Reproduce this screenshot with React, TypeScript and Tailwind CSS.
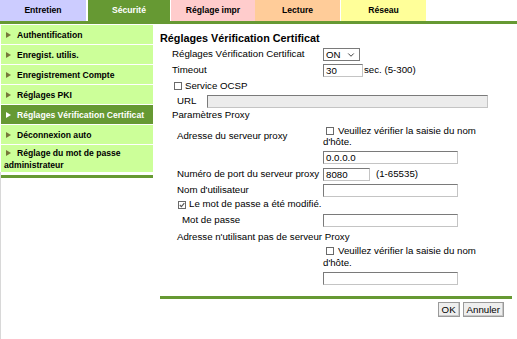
import { ChevronDown } from 'lucide-react';

const tabs = [
  { label: 'Entretien', cls: 'w-[86px] mr-[2px] bg-[#ccccff] text-black' },
  { label: 'Sécurité', cls: 'w-[82px] mr-px bg-[#669933] text-white' },
  { label: 'Réglage impr', cls: 'w-[84px] bg-[#ffcccc] text-black' },
  { label: 'Lecture', cls: 'w-[85px] mr-px bg-[#ffcc99] text-black' },
  { label: 'Réseau', cls: 'w-[85px] bg-[#ffff99] text-black' },
];

const menu = [
  'Authentification',
  'Enregist. utilis.',
  'Enregistrement Compte',
  'Réglages PKI',
  'Réglages Vérification Certificat',
  'Déconnexion auto',
  'Réglage du mot de passe administrateur',
];

function Arrow({ white }: { white?: boolean }) {
  return (
    <svg width="5" height="6" viewBox="0 0 5 6" className="inline-block mr-[6px] ml-[2px] align-[0px]">
      <path d="M0 0 L5 3 L0 6 Z" fill={white ? '#ffffff' : '#77773a'} />
    </svg>
  );
}

function Box({ checked }: { checked?: boolean }) {
  return (
    <span className="inline-flex items-center justify-center w-[8px] h-[8px] border border-[#6a6a6a] bg-white align-[-1px] mr-[3px]">
      {checked && (
        <svg width="6" height="6" viewBox="0 0 6 6">
          <path d="M0.8 3 L2.4 4.6 L5.3 1.2" stroke="#555" strokeWidth="1.1" fill="none" />
        </svg>
      )}
    </span>
  );
}

function Field({ w, value, disabled }: { w: string; value?: string; disabled?: boolean }) {
  return (
    <div
      className={`${w} h-[13px] border border-[#7a7a7a] border-r-[#c4c4c4] border-b-[#c4c4c4] ${
        disabled ? 'bg-[#ececec]' : 'bg-white'
      } pl-[2px] leading-[11px] text-[9.7px]`}
    >
      {value}
    </div>
  );
}

export default function App() {
  return (
    <div
      className="w-[517px] h-[339px] bg-white overflow-hidden text-black"
      style={{ fontFamily: '"Liberation Sans", Arial, sans-serif' }}
    >
      {/* Tabs */}
      <div className="flex h-[21px]">
        {tabs.map((t) => (
          <div key={t.label} className={`${t.cls} flex items-center justify-center text-[8.6px] font-bold`}>
            {t.label}
          </div>
        ))}
      </div>
      <div className="h-[3px] bg-[#669933]" />

      <div className="flex pt-px">
        {/* Sidebar */}
        <div className="w-[153px] shrink-0 h-[314px] border-l border-[#d8d8d8]">
          <div className="flex flex-col gap-px -ml-px pl-px bg-white">
            {menu.map((m, i) => {
              const active = i === 4;
              const last = i === menu.length - 1;
              return (
                <div
                  key={m}
                  className={`${last ? 'h-[27px] pt-[2px] leading-[12px]' : 'h-[19px] flex items-center leading-[10px]'} pl-[3px] text-[8.6px] font-bold ${
                    active ? 'bg-[#669933] text-white' : 'bg-[#ccff99] text-black'
                  }`}
                >
                  <span>
                    <Arrow white={active} />
                    {m}
                  </span>
                </div>
              );
            })}
          </div>
          <div className="h-[3px] mt-[3px] bg-[#669933]" />
        </div>

        {/* Main */}
        <div className="flex-1 pl-[7px] pr-[5px] pt-[4px] text-[9.7px]">
          <div className="h-[18px] flex items-center text-[10.8px] font-bold">Réglages Vérification Certificat</div>

          <div className="h-[15px] flex items-center">
            <div className="w-[163px] pl-[12px]">Réglages Vérification Certificat</div>
            <div className="w-[37px] h-[13px] border border-[#7a7a7a] flex items-center justify-between pl-[2px] pr-[3px] leading-none">
              <span>ON</span>
              <ChevronDown size={10} strokeWidth={1.8} />
            </div>
          </div>

          <div className="h-[17px] flex items-center">
            <div className="w-[163px] pl-[12px]">Timeout</div>
            <Field w="w-[40px]" value="30" />
            <span className="ml-px">sec. (5-300)</span>
          </div>

          <div className="h-[14px] flex items-center pl-[14px]">
            <Box />
            <span>Service OCSP</span>
          </div>

          <div className="h-[16px] flex items-center">
            <div className="w-[47px] pl-[17px]">URL</div>
            <Field w="w-[281px]" disabled />
          </div>

          <div className="h-[13px] flex items-center pl-[12px]">Paramètres Proxy</div>

          <div className="h-[26px] mt-px flex items-center">
            <div className="w-[163px] pl-[17px]">Adresse du serveur proxy</div>
            <div className="leading-[11px] w-[160px]">
              <span className="ml-[3px]">
                <Box />
              </span>
              <span className="ml-px">Veuillez vérifier la saisie du nom d'hôte.</span>
            </div>
          </div>
          <div className="h-[17px] flex items-center pl-[163px]">
            <Field w="w-[135px]" value="0.0.0.0" />
          </div>

          <div className="h-[16px] flex items-center">
            <div className="w-[163px] pl-[17px]">Numéro de port du serveur proxy</div>
            <Field w="w-[47px]" value="8080" />
            <span className="ml-[6px]">(1-65535)</span>
          </div>

          <div className="h-[16px] flex items-center">
            <div className="w-[163px] pl-[17px]">Nom d'utilisateur</div>
            <Field w="w-[135px]" />
          </div>

          <div className="h-[13px] flex items-center pl-[18px]">
            <Box checked />
            <span>Le mot de passe a été modifié.</span>
          </div>

          <div className="h-[19px] flex items-center">
            <div className="w-[163px] pl-[22px]">Mot de passe</div>
            <Field w="w-[135px]" />
          </div>

          <div className="h-[14px] flex items-center pl-[17px]">Adresse n'utilisant pas de serveur Proxy</div>

          <div className="h-[26px] flex items-center pl-[163px]">
            <div className="leading-[12px] w-[160px]">
              <span className="ml-[3px]">
                <Box />
              </span>
              <span className="ml-px">Veuillez vérifier la saisie du nom d'hôte.</span>
            </div>
          </div>
          <div className="h-[16px] flex items-center pl-[163px]">
            <Field w="w-[135px]" />
          </div>

          <div className="h-[3px] mt-[10px] bg-[#669933]" />

          <div className="flex justify-end gap-[3px] mt-[3px] pr-[8px]">
            <button className="h-[15px] px-[3px] border border-[#9a9a9a] bg-[#eeeeee] shadow-[inset_-1px_-1px_0_#c8c8c8] leading-none text-[9.7px]">
              OK
            </button>
            <button className="h-[15px] px-[3px] border border-[#9a9a9a] bg-[#eeeeee] shadow-[inset_-1px_-1px_0_#c8c8c8] leading-none text-[9.7px]">
              Annuler
            </button>
          </div>
        </div>
      </div>
    </div>
  );
}
